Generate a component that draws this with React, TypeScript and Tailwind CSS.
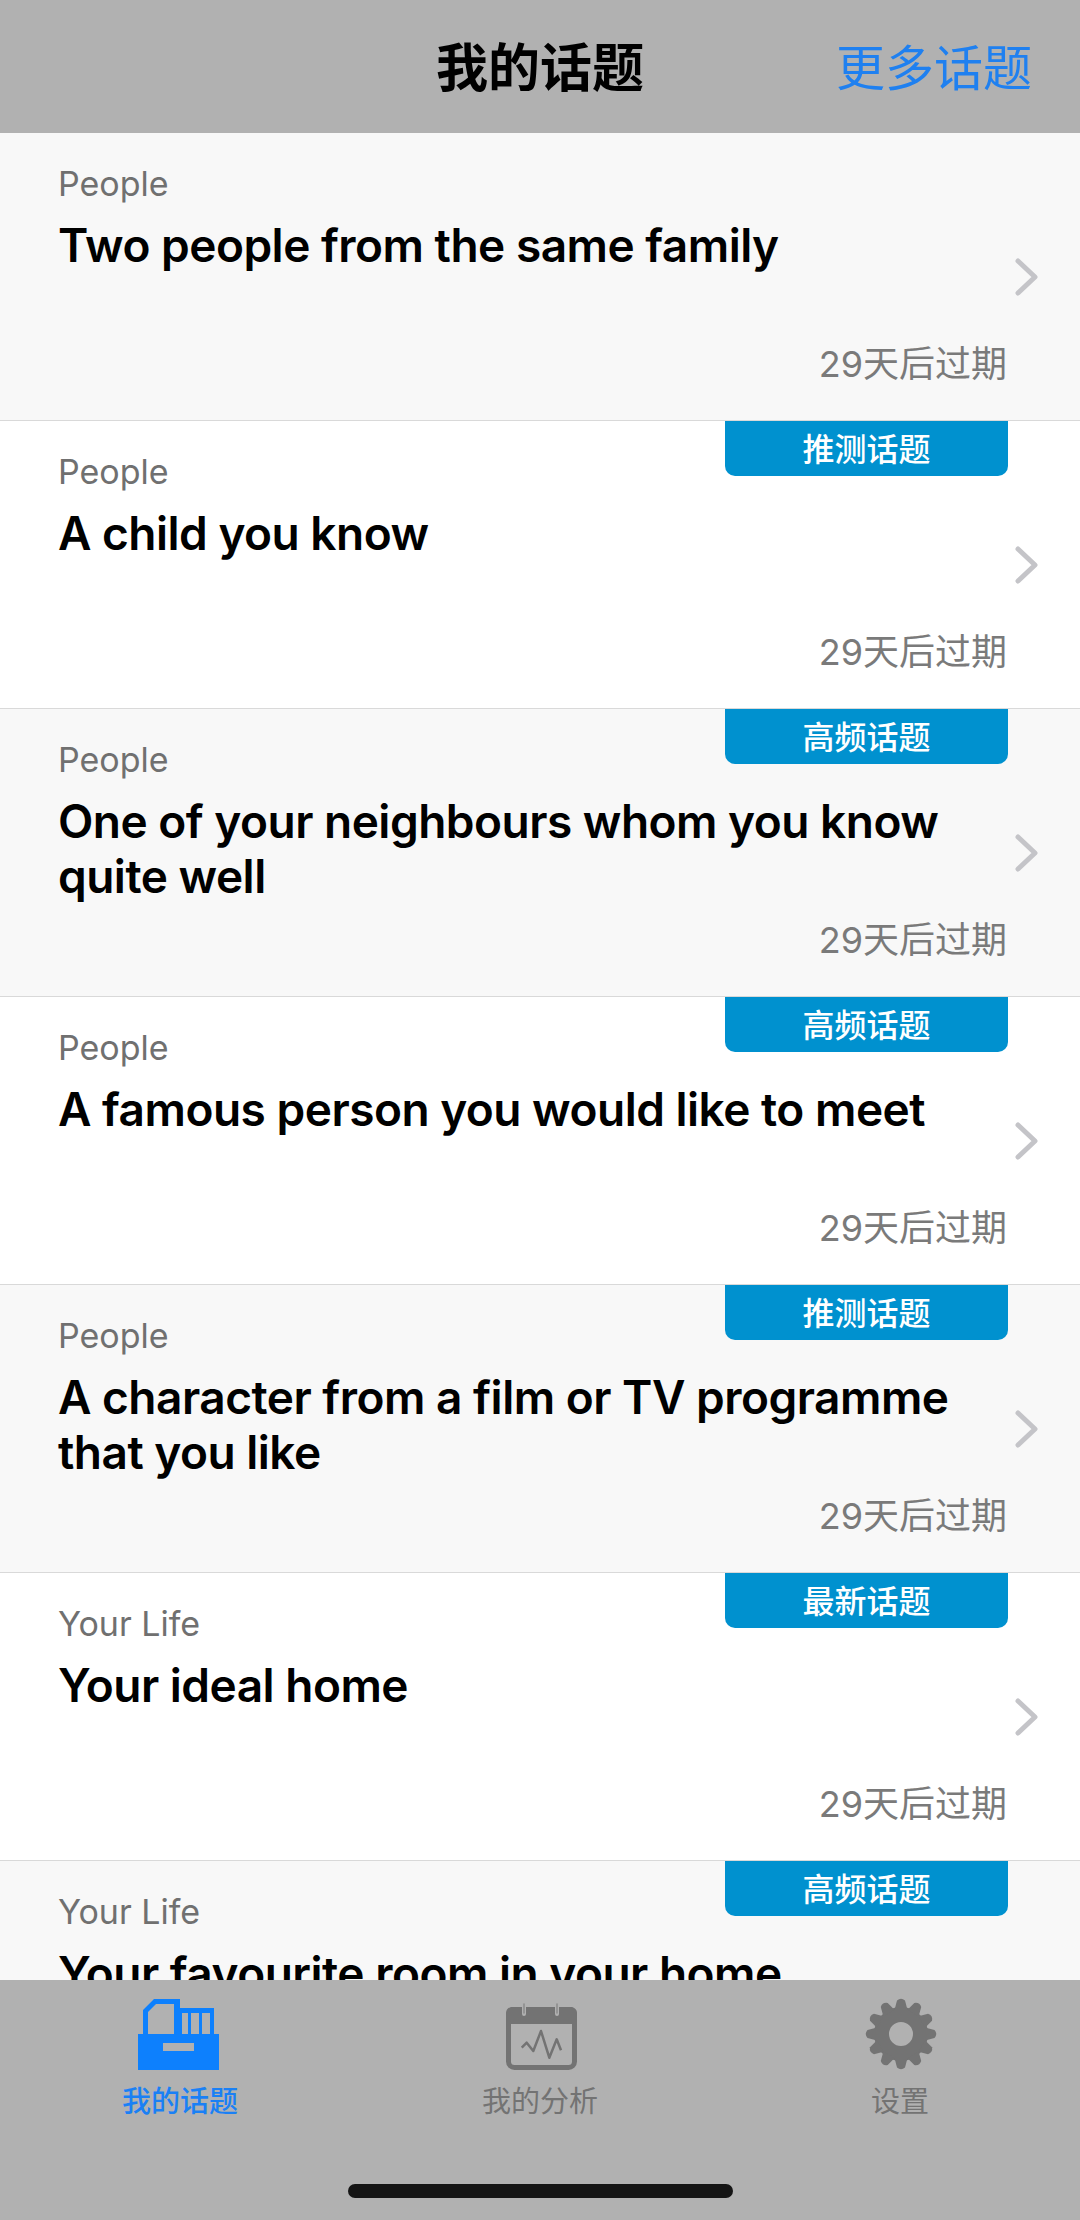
const topics = [
  { category: "People", title: "Two people from the same family", badge: "" },
  { category: "People", title: "A child you know", badge: "推测话题" },
  { category: "People", title: "One of your neighbours whom you know quite well", badge: "高频话题" },
  { category: "People", title: "A famous person you would like to meet", badge: "高频话题" },
  { category: "People", title: "A character from a film or TV programme that you like", badge: "推测话题" },
  { category: "Your Life", title: "Your ideal home", badge: "最新话题" },
  { category: "Your Life", title: "Your favourite room in your home", badge: "高频话题" },
];

function BoxIcon() {
  return (
    <svg width="81" height="71" viewBox="0 0 81 71" fill="#0d80fd">
      <path
        fillRule="evenodd"
        d="M5 35V11L16 0H42V9H76V35H72V14H64V35H61V14H53V35H50V14H44V35H36V5H18L10 13V35Z"
      />
      <path fillRule="evenodd" d="M0 35H81V71H0ZM25 44V52H56V44Z" />
    </svg>
  );
}

function CalendarIcon() {
  return (
    <svg width="71" height="67" viewBox="0 0 71 67" fill="none">
      <rect x="2.5" y="6.5" width="66" height="58" rx="6" stroke="#737373" strokeWidth="5" />
      <path d="M0 21V10C0 6.5 3 4 6 4H65C68 4 71 6.5 71 10V21Z" fill="#737373" />
      <path d="M18 1V11M51 1V11" stroke="#b1b1b1" strokeWidth="4" strokeLinecap="round" />
      <path d="M18 1V10M51 1V10" stroke="#8a8a8a" strokeWidth="1.5" strokeLinecap="round" />
      <path
        d="M15.7 44.7L20.7 39.7L27.3 48L35 28L43.3 54.7L50.7 36.3L55 47.3"
        stroke="#737373"
        strokeWidth="2.5"
        strokeLinejoin="round"
      />
    </svg>
  );
}

function GearIcon() {
  const teeth = [0, 30, 60, 90, 120, 150, 180, 210, 240, 270, 300, 330];
  return (
    <svg width="72" height="72" viewBox="-36 -36 72 72" fill="#737373">
      <circle cx="0" cy="0" r="19.5" fill="none" stroke="#737373" strokeWidth="15" />
      {teeth.map((deg) => (
        <path
          key={deg}
          transform={`rotate(${deg})`}
          d="M-6.5 -24L-4 -33.5Q0 -37 4 -33.5L6.5 -24Z"
        />
      ))}
    </svg>
  );
}

function TopicRow({
  category,
  title,
  badge,
  shaded,
}: {
  category: string;
  title: string;
  badge: string;
  shaded: boolean;
}) {
  return (
    <div
      className={`relative flex h-[288px] shrink-0 items-center border-b border-[#d9d9d9] pl-[58px] pr-[41px] ${
        shaded ? "bg-[#f8f8f8]" : "bg-white"
      }`}
    >
      {badge && (
        <div className="absolute right-[72px] top-0 flex h-[55px] w-[283px] items-center justify-center rounded-b-[10px] bg-[#0091cf] pt-[2px] text-[32px] font-medium text-white">
          {badge}
        </div>
      )}
      <div className="flex h-full min-w-0 flex-1 flex-col pr-[8px]">
        <div className="mt-[28px] text-[34px] leading-[46px] text-[#707070]">{category}</div>
        <div className="mt-[11px] text-[46px] font-semibold leading-[55px] tracking-[-0.5px] text-black">{title}</div>
        <div className="mb-[33px] mt-auto text-right text-[36px] leading-[46px] text-[#7a7a7a]">
          29天后过期
        </div>
      </div>
      <svg width="24" height="38" viewBox="0 0 24 38" fill="none" className="shrink-0">
        <path d="M3 3L20 19L3 35" stroke="#c4c4c8" strokeWidth="5" strokeLinecap="round" strokeLinejoin="round" />
      </svg>
    </div>
  );
}

function App() {
  return (
    <div className="flex h-[2220px] w-[1080px] flex-col overflow-hidden bg-white font-['Inter','Noto_Sans_CJK_SC',sans-serif]">
      <header className="relative flex h-[133px] shrink-0 items-center justify-center bg-[#b1b1b1] pt-[4px]">
        <h1 className="text-[52px] font-semibold text-black">我的话题</h1>
        <span className="absolute right-[48px] text-[49px] text-[#1f80f0]">更多话题</span>
      </header>

      <main className="flex min-h-0 flex-1 flex-col overflow-hidden">
        {topics.map((t, i) => (
          <TopicRow key={i} category={t.category} title={t.title} badge={t.badge} shaded={i % 2 === 0} />
        ))}
      </main>

      <footer className="flex h-[240px] shrink-0 flex-col bg-[#b1b1b1]">
        <div className="grid grid-cols-3 pt-[18px]">
          <div className="flex flex-col items-center">
            <div className="mr-[3px] flex h-[72px] items-center">
              <BoxIcon />
            </div>
            <span className="mt-[15px] text-[29px] font-medium leading-[34px] text-[#1a80f5]">我的话题</span>
          </div>
          <div className="flex flex-col items-center">
            <div className="ml-[2px] flex h-[72px] items-end">
              <CalendarIcon />
            </div>
            <span className="mt-[15px] text-[29px] leading-[34px] text-[#737373]">我的分析</span>
          </div>
          <div className="flex flex-col items-center">
            <div className="ml-[1px] flex h-[72px] items-center">
              <GearIcon />
            </div>
            <span className="mt-[15px] text-[29px] leading-[34px] text-[#737373]">设置</span>
          </div>
        </div>
        <div className="mx-auto mt-[65px] h-[14px] w-[385px] rounded-full bg-[#151515]" />
      </footer>
    </div>
  );
}

export default App;
